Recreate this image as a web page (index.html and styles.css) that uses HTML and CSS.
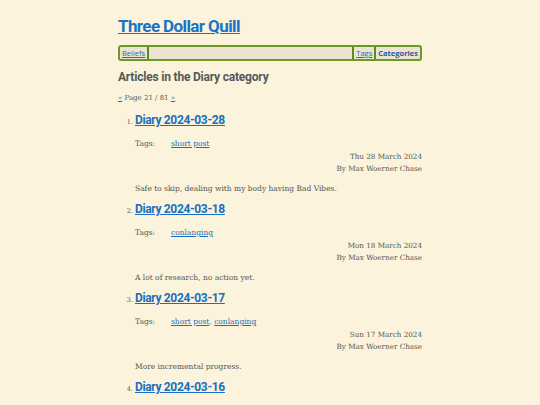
FILE: index.html
```html
<!DOCTYPE html>
<html>
<head>
<meta charset="utf-8">
<link rel="stylesheet" href="styles.css">
</head>
<body>
<div class="page">
  <header class="site-header">
    <h1 class="site-title"><a href="#">Three Dollar Quill</a></h1>
    <nav class="nav">
      <a class="nav-item" href="#">Beliefs</a>
      <span class="nav-spacer"></span>
      <a class="nav-item" href="#">Tags</a>
      <span class="nav-item current">Categories</span>
    </nav>
  </header>
  <main>
    <h2 class="page-heading">Articles in the Diary category</h2>
    <p class="pager"><a href="#">«</a> Page 21 / 81 <a href="#">»</a></p>
    <ol class="articles" start="1">
      <li class="article">
        <h3 class="article-title"><a href="#">Diary 2024-03-28</a></h3>
        <div class="tags"><span class="tags-label">Tags:</span><span><a href="#">short post</a></span></div>
        <div class="meta"><div>Thu 28 March 2024</div><div>By Max Woerner Chase</div></div>
        <p class="summary">Safe to skip, dealing with my body having Bad Vibes.</p>
      </li>
      <li class="article">
        <h3 class="article-title"><a href="#">Diary 2024-03-18</a></h3>
        <div class="tags"><span class="tags-label">Tags:</span><span><a href="#">conlanging</a></span></div>
        <div class="meta"><div>Mon 18 March 2024</div><div>By Max Woerner Chase</div></div>
        <p class="summary">A lot of research, no action yet.</p>
      </li>
      <li class="article">
        <h3 class="article-title"><a href="#">Diary 2024-03-17</a></h3>
        <div class="tags"><span class="tags-label">Tags:</span><span><a href="#">short post</a>, <a href="#">conlanging</a></span></div>
        <div class="meta"><div>Sun 17 March 2024</div><div>By Max Woerner Chase</div></div>
        <p class="summary">More incremental progress.</p>
      </li>
      <li class="article">
        <h3 class="article-title"><a href="#">Diary 2024-03-16</a></h3>
      </li>
    </ol>
  </main>
</div>
</body>
</html>
```
FILE: styles.css
```css
html, body {
  margin: 0;
  padding: 0;
  background: #fbf3dc;
}
body {
  font-family: "DejaVu Serif", "Liberation Serif", serif;
  font-size: 7.5px;
  color: #555550;
  overflow: hidden;
  height: 405px;
}
a {
  color: #1a6fc0;
}
.page {
  width: 304px;
  margin: 0 auto;
  padding-top: 15px;
}
.site-title {
  margin: 0;
  font-family: Roboto, "DejaVu Sans", sans-serif;
  font-size: 17px;
  font-weight: 700;
  line-height: 22px;
  letter-spacing: -0.6px;
}
.site-title a {
  color: #1a73c4;
}
.nav {
  display: flex;
  margin-top: 8px;
  height: 12px;
  border: 2px solid #6b9a22;
  border-radius: 3px;
  background: #ece4cf;
  font-family: "Open Sans", "DejaVu Sans", sans-serif;
  font-size: 7.5px;
  line-height: 12px;
}
.nav-item {
  padding: 0 2px;
  border-right: 2px solid #5e8c1a;
}
.nav-spacer {
  flex: 1;
  border-right: 2px solid #5e8c1a;
}
.nav-item:last-child {
  border-right: 0;
}
.current {
  color: #1a5ea8;
  font-weight: 700;
}
.page-heading {
  margin: 8px 0 0;
  font-family: Roboto, "DejaVu Sans", sans-serif;
  font-size: 12px;
  font-weight: 700;
  line-height: 16px;
  letter-spacing: -0.2px;
  color: #55595a;
}
.pager {
  margin: 8px 0 0;
  font-size: 7px;
  line-height: 10px;
}
.articles {
  margin: 8px 0 0;
  padding-left: 17px;
}
.article {
  font-size: 6.5px;
  height: 89px;
}
.article-title {
  margin: 0;
  display: inline-block;
  font-family: Roboto, "DejaVu Sans", sans-serif;
  font-size: 12px;
  line-height: 18px;
  font-weight: 700;
  letter-spacing: -0.35px;
}
.tags {
  display: flex;
  margin-top: 9px;
  font-size: 7.5px;
  line-height: 12px;
}
.tags-label {
  width: 36px;
}
.meta {
  text-align: right;
  font-size: 7.2px;
  line-height: 12px;
  margin-top: 1px;
}
.summary {
  margin: 8px 0 0;
  font-size: 7.5px;
  line-height: 12px;
}
```
